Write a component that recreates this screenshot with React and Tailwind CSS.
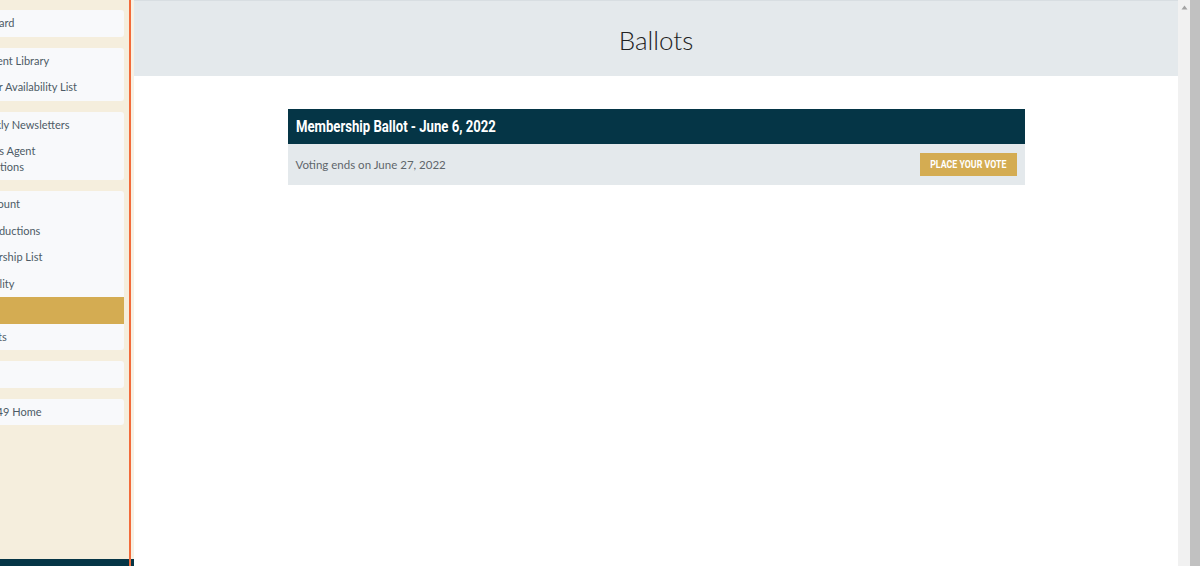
import React from 'react';

const groups = [
  [{ label: 'Dashboard' }],
  [{ label: 'Document Library' }, { label: 'Member Availability List' }],
  [{ label: 'Weekly Newsletters', pad: 'pl-[33px]' }, { label: 'Business Agent Notifications', lines: ['Business Agent', 'Notifications'] }],
  [
    { label: 'My Account' },
    { label: 'Dues Deductions', pad: 'pl-[17px]' },
    { label: 'Membership List' },
    { label: 'Availability' },
    { label: 'Ballots', active: true },
    { label: 'Receipts', pad: 'pl-[26px]' },
  ],
  [{ label: 'Logout', hidden: true }],
  [{ label: 'Local 49 Home', pad: 'pl-[29px]' }],
];

const SidebarItem = ({ item }) => {
  if (item.active) {
    return <div className="h-[26.5px] bg-[#d4ac52]" />;
  }
  if (item.lines) {
    return (
      <div className="pt-[5px] pb-[5px] leading-[16px]">
        {item.lines.map((l) => (
          <div key={l} className="whitespace-nowrap">{l}</div>
        ))}
      </div>
    );
  }
  return (
    <div className="h-[26.5px] flex items-center whitespace-nowrap">
      {item.hidden ? '' : item.label}
    </div>
  );
};

const Sidebar = () => (
  <div className="w-[134px] h-full flex shrink-0">
    <div className="w-[129px] h-full flex flex-col">
      <nav className="flex-1 bg-[#f5eedd] overflow-hidden pt-[10px]">
        <div className="-ml-[60px] mr-[5px] flex flex-col gap-[11px] text-[11px] text-[#4d5b66]" style={{ fontFamily: 'Lato, "Open Sans", sans-serif' }}>
          {groups.map((g, i) => (
            <div key={i} className="bg-[#f8f9fb] rounded-[3px] overflow-hidden">
              {g.map((item) => (
                <div key={item.label} className={item.active ? '' : item.pad || 'pl-[22px]'}>
                  <SidebarItem item={item} />
                </div>
              ))}
            </div>
          ))}
        </div>
      </nav>
      <div className="h-[7px] bg-[#053546]" />
    </div>
    <div className="w-[2px] h-full bg-[#f26b3a]" />
    <div className="w-[3px] h-full flex flex-col">
      <div className="flex-1 bg-[#f7f1e4]" />
      <div className="h-[7px] bg-[#053546]" />
    </div>
  </div>
);

const condensed = { fontFamily: 'Roboto, "Liberation Sans", sans-serif' };

const BallotCard = () => (
  <div className="w-[737px] mx-auto mt-[33px]">
    <div className="h-[35px] bg-[#053546] flex items-center px-[8px]">
      <h2 className="text-white text-[16px] font-bold whitespace-nowrap origin-left scale-x-[0.82]" style={condensed}>
        Membership Ballot - June 6, 2022
      </h2>
    </div>
    <div className="h-[41px] bg-[#e4e9ec] flex items-center justify-between pl-[8px] pr-[8px]">
      <span className="text-[11.5px] text-[#5f666b]" style={{ fontFamily: 'Lato, "Open Sans", sans-serif' }}>
        Voting ends on June 27, 2022
      </span>
      <button className="h-[23px] w-[97px] bg-[#d4ac52] text-white flex items-center justify-center">
        <span className="text-[10px] font-bold uppercase whitespace-nowrap scale-x-[0.88]" style={condensed}>
          Place Your Vote
        </span>
      </button>
    </div>
  </div>
);

export default function App() {
  return (
    <div className="w-[1200px] h-[566px] flex overflow-hidden bg-white">
      <Sidebar />
      <main className="flex-1 flex flex-col">
        <header className="h-[76px] bg-[#e4e9ec] border-t border-[#d8dee2] flex items-center justify-center">
          <h1 className="text-[26px] font-light text-[#222] pt-[3px]" style={{ fontFamily: 'Lato, "Open Sans", sans-serif' }}>
            Ballots
          </h1>
        </header>
        <BallotCard />
      </main>
      <div className="w-[12px] h-full bg-[#f1f1f1] flex justify-center pt-[5px]">
        <svg width="7" height="5" viewBox="0 0 7 5">
          <path d="M3.5 0.5 L6.5 4.5 L0.5 4.5 Z" fill="#a3a3a3" />
        </svg>
      </div>
      <div className="w-[10px] h-full bg-[#c1c1c1]" />
    </div>
  );
}
